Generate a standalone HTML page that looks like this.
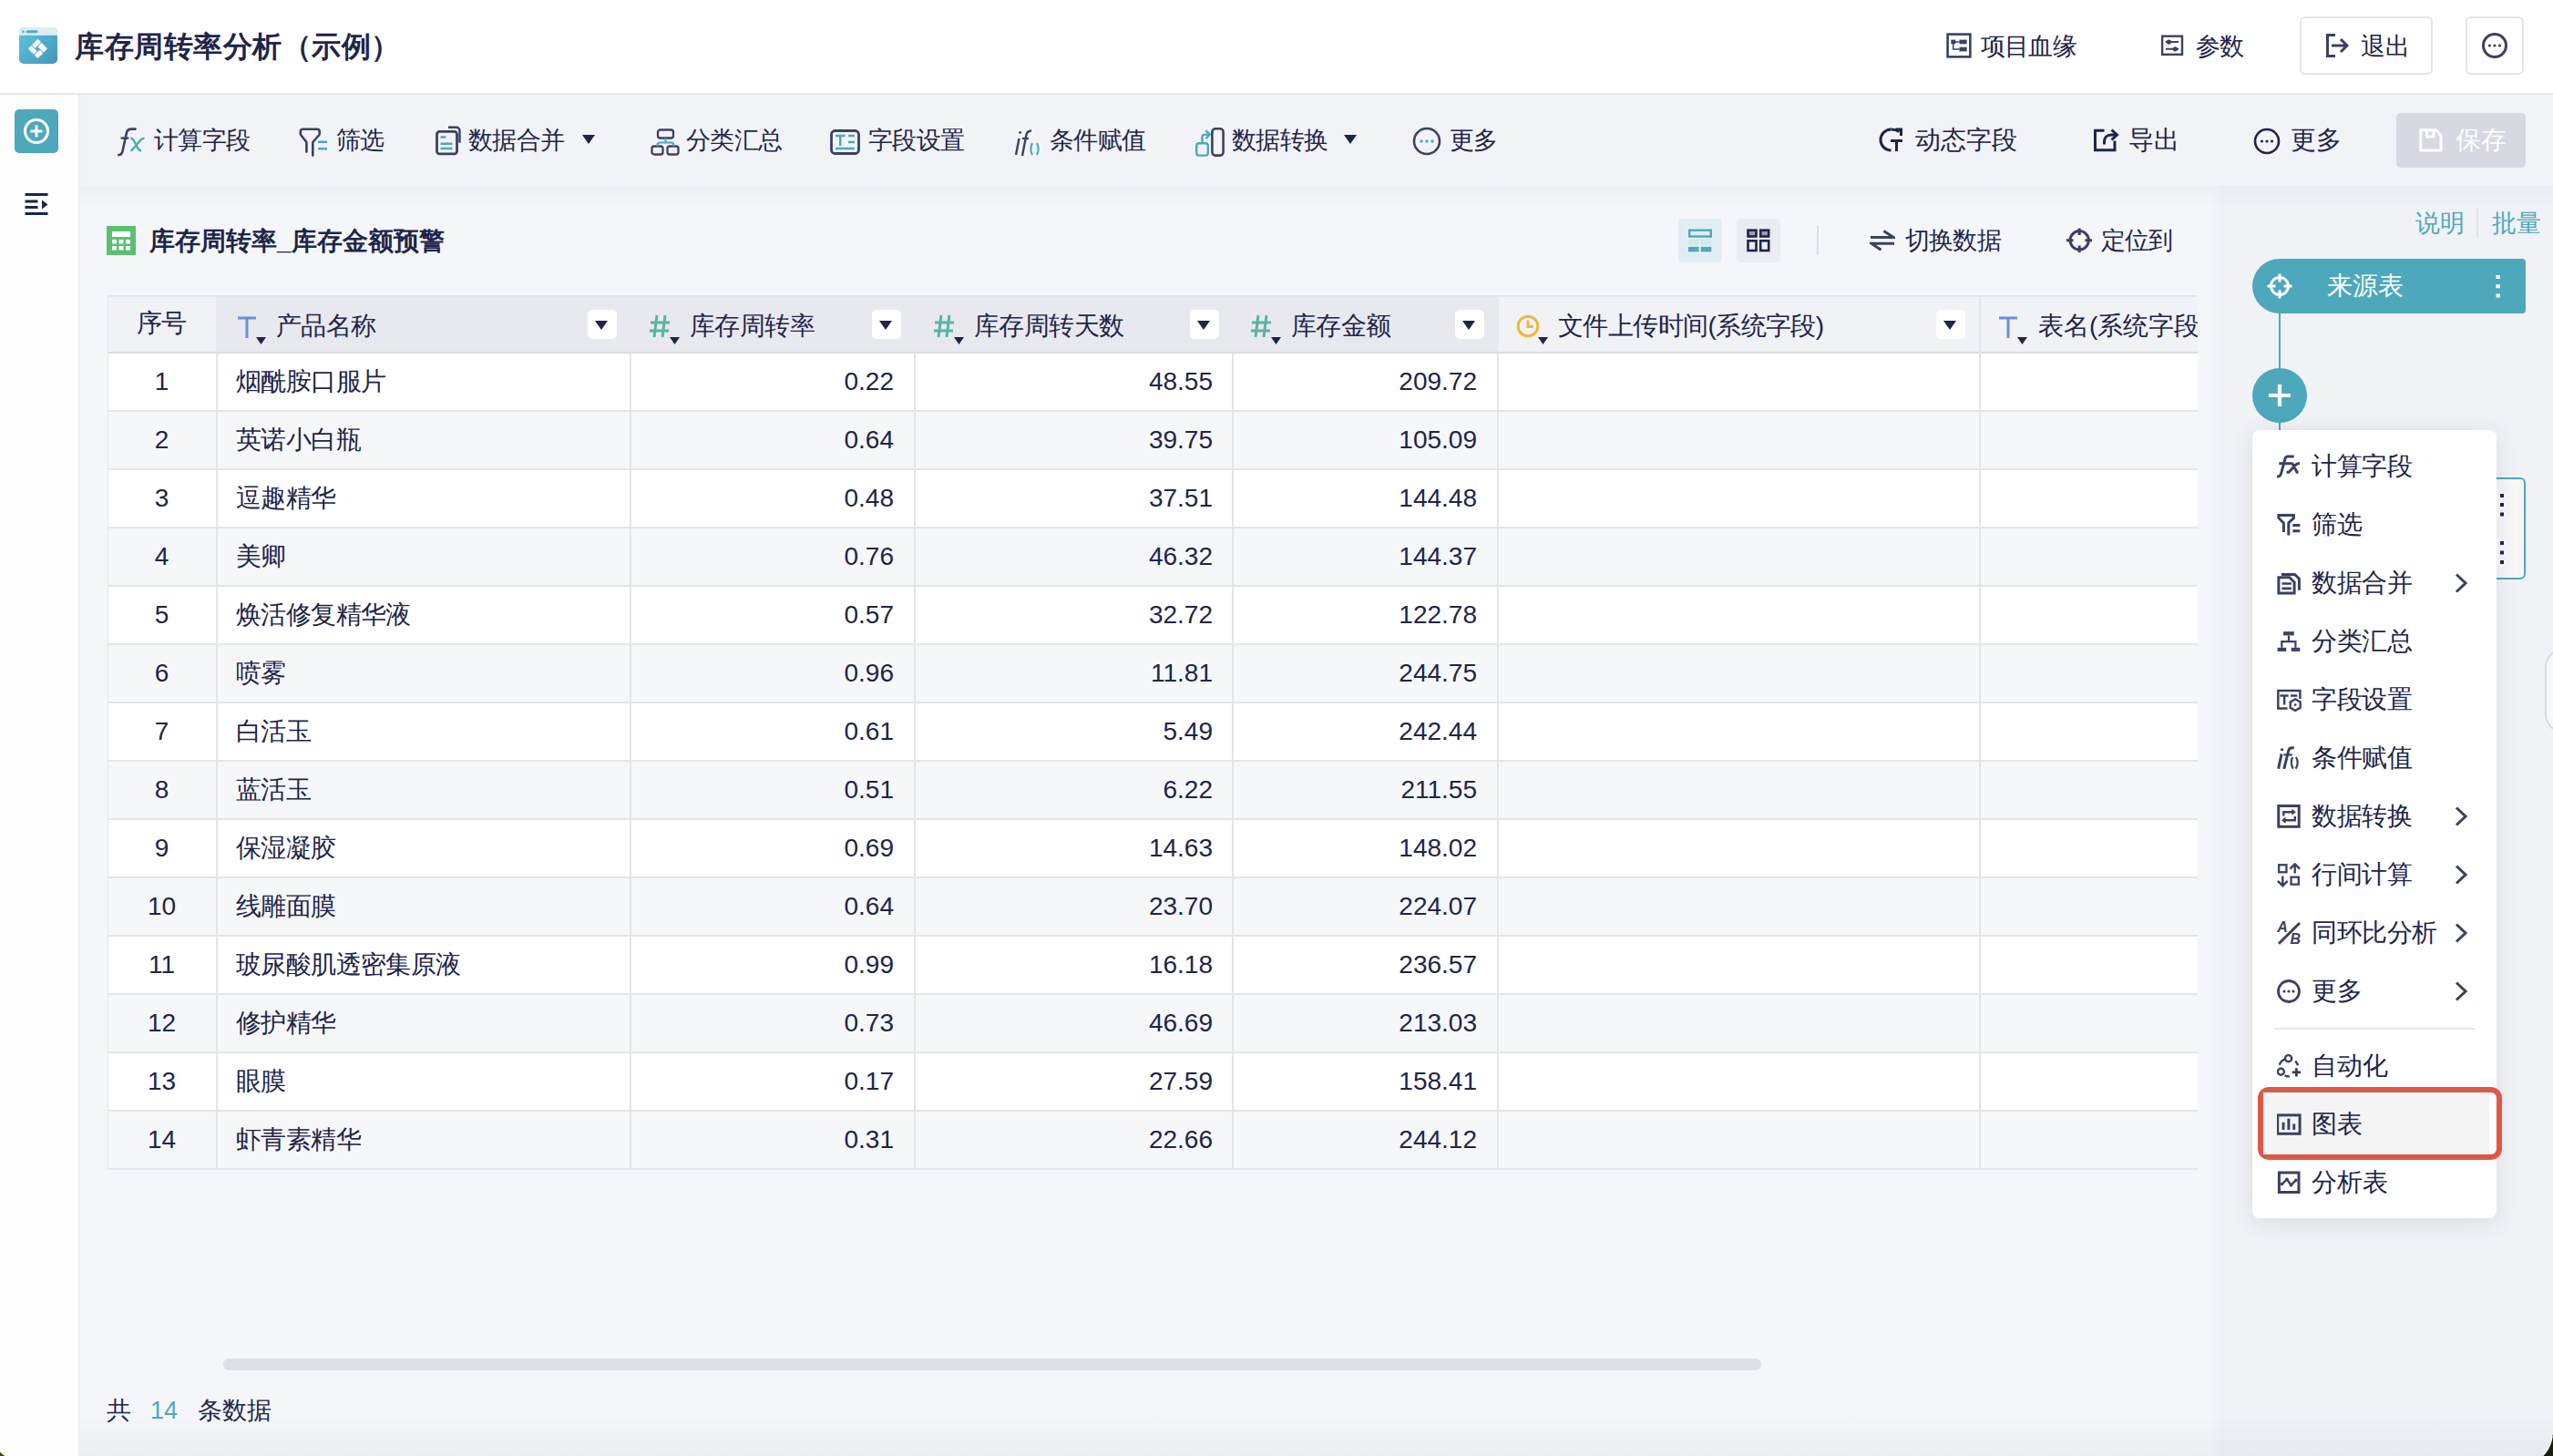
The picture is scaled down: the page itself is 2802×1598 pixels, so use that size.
<!DOCTYPE html>
<html><head><meta charset="utf-8"><style>
html,body{margin:0;padding:0;}
body{width:2802px;height:1598px;position:relative;overflow:hidden;font-family:"Liberation Sans",sans-serif;background:#f5f6f9;}
.r{position:absolute;}
.t{position:absolute;white-space:nowrap;}
</style></head><body>
<div class="r" style="left:0px;top:0px;width:2802px;height:1598px;background:#f5f6f9"></div><div class="r" style="left:2441px;top:204px;width:361px;height:1394px;background:#f1f2f6;box-shadow:-6px 0 14px rgba(30,40,80,0.03)"></div><div class="r" style="left:0px;top:0px;width:2802px;height:102px;background:#ffffff"></div><div class="r" style="left:0px;top:102px;width:2802px;height:2px;background:#e4e6eb"></div><div class="r" style="left:0px;top:104px;width:86px;height:1494px;background:#fdfdfe"></div><div class="r" style="left:86px;top:104px;width:2px;height:1494px;background:#eceef3"></div><div class="r" style="left:88px;top:104px;width:2714px;height:100px;background:#f2f3f7"></div><div class="r" style="left:88px;top:204px;width:2714px;height:22px;background:linear-gradient(180deg,rgba(40,50,90,0.035),rgba(40,50,90,0))"></div><svg class="r" style="left:21px;top:30px" width="42" height="40" viewBox="0 0 42 40" fill="none">
<defs><linearGradient id="lg" x1="0" y1="0" x2="1" y2="1"><stop offset="0" stop-color="#62c5de"/><stop offset="1" stop-color="#4096b8"/></linearGradient>
<clipPath id="lc"><rect x="0" y="0" width="42" height="40" rx="5"/></clipPath></defs>
<g clip-path="url(#lc)"><rect x="0" y="0" width="42" height="40" fill="url(#lg)"/><rect x="0" y="0" width="42" height="8.8" fill="#dbeef4"/></g>
<circle cx="4.4" cy="4.7" r="1.5" fill="#58b6cf"/><rect x="7.6" y="3.2" width="13" height="3" rx="1.5" fill="#52abc6"/>
<g fill="#f6f7f9" transform="translate(20.4 23.4) rotate(45) scale(-1 1)">
<rect x="-7.6" y="-7.6" width="9.2" height="6.1" rx="1"/><rect x="2.4" y="-7.6" width="5.2" height="9.2" rx="1"/>
<rect x="-1.6" y="2.4" width="9.2" height="5.2" rx="1"/><rect x="-7.6" y="-0.8" width="5.2" height="8.4" rx="1"/>
</g></svg><div class="t" style="left:82px;top:34.5px;font-size:32px;line-height:32px;color:#1e254a;font-weight:bold;letter-spacing:0.5px;">库存周转率分析（示例）</div><svg class="r" style="left:2136px;top:36px" width="28" height="28" viewBox="0 0 28 28" fill="none"><rect x="1.6" y="1.6" width="24.75" height="24.75" stroke="#3b4163" stroke-width="2.6"/>
<rect x="5.3" y="7.6" width="4.9" height="4.7" fill="#3b4163"/><rect x="14.5" y="7.6" width="8.2" height="4.7" fill="#3b4163"/><rect x="14.5" y="15.7" width="8.2" height="4.7" fill="#3b4163"/>
<path d="M10 9.9H14.5M7.7 12V17.9H14.5" stroke="#3b4163" stroke-width="1.5"/></svg><div class="t" style="left:2174px;top:37.5px;font-size:27px;line-height:27px;color:#1e254a;font-weight:normal;letter-spacing:-0.8px;">项目血缘</div><svg class="r" style="left:2372px;top:38px" width="26" height="25" viewBox="0 0 26 25" fill="none"><rect x="1.1" y="1.7" width="21.9" height="20.1" stroke="#3b4163" stroke-width="2.4"/>
<path d="M4.9 8.1H19.1M4.9 15.8H19.1" stroke="#3b4163" stroke-width="2"/><circle cx="8.4" cy="8.1" r="2.6" fill="#3b4163"/><circle cx="15.3" cy="15.8" r="2.6" fill="#3b4163"/></svg><div class="t" style="left:2410px;top:37.5px;font-size:27px;line-height:27px;color:#1e254a;font-weight:normal;letter-spacing:-1.5px;">参数</div><div class="r" style="left:2524px;top:18px;width:146px;height:64px;box-sizing:border-box;border:2px solid #e3e5ec;border-radius:6px;background:#fff"></div><svg class="r" style="left:2553px;top:37px" width="26" height="26" viewBox="0 0 26 26" fill="none"><path d="M10 1.5H1.5v23H10" stroke="#3b4163" stroke-width="3"/><path d="M6 13h17M16 6l7 7-7 7" stroke="#3b4163" stroke-width="3"/></svg><div class="t" style="left:2591px;top:37.5px;font-size:27px;line-height:27px;color:#1e254a;font-weight:normal;">退出</div><div class="r" style="left:2706px;top:18px;width:64px;height:64px;box-sizing:border-box;border:2px solid #e3e5ec;border-radius:6px;background:#fff"></div><svg class="r" style="left:2723px;top:35px" width="30" height="30" viewBox="0 0 30 30" fill="none"><circle cx="15" cy="15" r="12.5" stroke="#3b4163" stroke-width="3"/><circle cx="9.5" cy="15" r="1.6" fill="#3b4163"/><circle cx="15" cy="15" r="1.6" fill="#3b4163"/><circle cx="20.5" cy="15" r="1.6" fill="#3b4163"/></svg><div class="r" style="left:16px;top:120px;width:48px;height:48px;background:#4da8bb;border-radius:5px"></div><svg class="r" style="left:16px;top:120px" width="48" height="48" viewBox="0 0 48 48" fill="none"><circle cx="24" cy="24" r="12.5" stroke="#fff" stroke-width="3"/><path d="M24 17.5v13M17.5 24h13" stroke="#fff" stroke-width="3"/></svg><svg class="r" style="left:27px;top:212px" width="26" height="24" viewBox="0 0 26 24" fill="none"><rect x="0.5" y="0" width="25" height="3" fill="#1e254a"/><rect x="0.5" y="7.5" width="14" height="3" fill="#1e254a"/>
<rect x="0.5" y="14" width="14" height="3" fill="#1e254a"/><rect x="0.5" y="21" width="25" height="3" fill="#1e254a"/><path d="M19 7.5l6.5 5-6.5 5z" fill="#1e254a"/></svg><svg class="r" style="left:129px;top:140px" width="32" height="32" viewBox="0 0 32 32" fill="none"><path d="M1.3 30Q4.5 30.3 5.5 26L10 5.5Q11 1.6 15 1.6H19.6" stroke="#3b4163" stroke-width="2.6" stroke-linecap="round"/><path d="M3.6 11.6H12.3" stroke="#3b4163" stroke-width="2.4"/>
<path d="M14.3 11.6Q16.5 11.6 18 14.5L22 22Q23 25.3 26 25.3M29.5 11.6Q27 11.6 25 14L17.5 23Q15.8 25.3 14.3 25.3" stroke="#4da8bb" stroke-width="2.4"/></svg><div class="t" style="left:169px;top:140.5px;font-size:27px;line-height:27px;color:#1e254a;font-weight:normal;letter-spacing:-0.7px;">计算字段</div><svg class="r" style="left:328px;top:140px" width="32" height="32" viewBox="0 0 32 32" fill="none"><path d="M8.4 26.6V16L2.5 8.5Q1.8 7.6 1.8 6.5V4.5Q1.8 1.8 4.5 1.8H20Q22.7 1.8 22.7 4.5V6.5Q22.7 7.6 22 8.5L15.3 16V30.6" stroke="#3b4163" stroke-width="2.6" stroke-linecap="round" stroke-linejoin="round"/>
<path d="M21 15.7h10M21 23.3h10" stroke="#4da8bb" stroke-width="2.4"/></svg><div class="t" style="left:369px;top:140.5px;font-size:27px;line-height:27px;color:#1e254a;font-weight:normal;letter-spacing:-0.7px;">筛选</div><svg class="r" style="left:477px;top:138px" width="32" height="34" viewBox="0 0 32 34" fill="none"><rect x="2.5" y="6.3" width="22" height="24.6" rx="3" stroke="#3b4163" stroke-width="2.8"/><path d="M15 1.8h9a3.5 3.5 0 0 1 3.5 3.5v13.5" stroke="#3b4163" stroke-width="2.4"/>
<path d="M6.5 12.5h6M6.5 19.8h13M6.5 25h13" stroke="#4da8bb" stroke-width="2.4"/></svg><div class="t" style="left:514px;top:140.5px;font-size:27px;line-height:27px;color:#1e254a;font-weight:normal;letter-spacing:-0.7px;">数据合并</div><svg class="r" style="left:639px;top:148px" width="14" height="10" viewBox="0 0 14 10" fill="none"><path d="M0 0h14L7 10z" fill="#1e254a"/></svg><svg class="r" style="left:714px;top:141px" width="32" height="30" viewBox="0 0 32 30" fill="none"><rect x="8" y="1.5" width="17" height="9" rx="2.5" stroke="#3b4163" stroke-width="2.3"/><rect x="1.5" y="19.5" width="12" height="9" rx="2.5" stroke="#3b4163" stroke-width="2.3"/><rect x="18.5" y="19.5" width="12" height="9" rx="2.5" stroke="#3b4163" stroke-width="2.3"/>
<path d="M16.5 10.5v5M7.5 19.5v-1a3 3 0 0 1 3-3h12a3 3 0 0 1 3 3v1" stroke="#4da8bb" stroke-width="2.1"/></svg><div class="t" style="left:753px;top:140.5px;font-size:27px;line-height:27px;color:#1e254a;font-weight:normal;letter-spacing:-0.7px;">分类汇总</div><svg class="r" style="left:911px;top:142px" width="34" height="28" viewBox="0 0 34 28" fill="none"><rect x="1.5" y="1.5" width="30" height="25" rx="4" stroke="#3b4163" stroke-width="2.8"/>
<path d="M6 7h10.5M11.2 7v11M20 7h7M20 14h7M6 21h21" stroke="#4da8bb" stroke-width="2.4"/></svg><div class="t" style="left:953px;top:140.5px;font-size:27px;line-height:27px;color:#1e254a;font-weight:normal;letter-spacing:-0.7px;">字段设置</div><svg class="r" style="left:1113px;top:140px" width="30" height="32" viewBox="0 0 30 32" fill="none"><path d="M5.5 12L2 30" stroke="#3b4163" stroke-width="2.4"/><circle cx="6.6" cy="5.5" r="1.4" fill="#3b4163"/>
<path d="M9 31l4.2-22c.6-3.5 2-5.5 5.8-5.5" stroke="#3b4163" stroke-width="2.4"/><path d="M9 12h7" stroke="#3b4163" stroke-width="2.2"/>
<path d="M20 17c-2 4-2 9 0 13M25 17c2 4 2 9 0 13" stroke="#4da8bb" stroke-width="2.2"/></svg><div class="t" style="left:1152px;top:140.5px;font-size:27px;line-height:27px;color:#1e254a;font-weight:normal;letter-spacing:-0.7px;">条件赋值</div><svg class="r" style="left:1312px;top:140px" width="33" height="33" viewBox="0 0 33 33" fill="none"><rect x="18.4" y="1.3" width="12.2" height="29.3" rx="3.5" stroke="#3b4163" stroke-width="2.6"/>
<rect x="1.2" y="17.3" width="12.6" height="13.3" rx="2.8" stroke="#4da8bb" stroke-width="2.4"/><path d="M7.4 16.1V10.5Q7.4 7.9 10 7.9H15M11.4 3.1L15.8 7.6L11.4 12.2" stroke="#4da8bb" stroke-width="2.4"/></svg><div class="t" style="left:1352px;top:140.5px;font-size:27px;line-height:27px;color:#1e254a;font-weight:normal;letter-spacing:-0.7px;">数据转换</div><svg class="r" style="left:1475px;top:148px" width="14" height="10" viewBox="0 0 14 10" fill="none"><path d="M0 0h14L7 10z" fill="#1e254a"/></svg><svg class="r" style="left:1550px;top:139px" width="32" height="32" viewBox="0 0 32 32" fill="none"><circle cx="16" cy="16" r="14" stroke="#3b4163" stroke-width="2.6"/><circle cx="10" cy="16" r="1.7" fill="#4da8bb"/><circle cx="16" cy="16" r="1.7" fill="#4da8bb"/><circle cx="22" cy="16" r="1.7" fill="#4da8bb"/></svg><div class="t" style="left:1591px;top:140.5px;font-size:27px;line-height:27px;color:#1e254a;font-weight:normal;letter-spacing:-0.7px;">更多</div><svg class="r" style="left:2062px;top:140px" width="28" height="28" viewBox="0 0 28 28" fill="none"><path d="M13.5 2A11.5 11.5 0 0 0 13.5 25" stroke="#1e254a" stroke-width="3"/><path d="M13.5 2c3 0 6 .6 9 2.5" stroke="#1e254a" stroke-width="3"/><path d="M18.5 2h6v7" stroke="#1e254a" stroke-width="3"/><path d="M13 14.5h13M19.5 14.5V26" stroke="#1e254a" stroke-width="3"/></svg><div class="t" style="left:2102px;top:140.0px;font-size:28px;line-height:28px;color:#1e254a;font-weight:normal;">动态字段</div><svg class="r" style="left:2296px;top:140px" width="30" height="28" viewBox="0 0 30 28" fill="none"><path d="M13.5 3.3H3.5v21.5h21.5V14.5" stroke="#1e254a" stroke-width="3"/><path d="M13.5 18.5v-3c0-4.5 3-7.5 7.5-7.5h4.5" stroke="#1e254a" stroke-width="3"/><path d="M21.5 2.5l6 5.5-6 5.5" stroke="#1e254a" stroke-width="3"/></svg><div class="t" style="left:2336px;top:140.0px;font-size:28px;line-height:28px;color:#1e254a;font-weight:normal;">导出</div><svg class="r" style="left:2473px;top:140px" width="30" height="30" viewBox="0 0 30 30" fill="none"><circle cx="15" cy="15" r="13" stroke="#1e254a" stroke-width="2.6"/><circle cx="9.5" cy="15" r="1.6" fill="#1e254a"/><circle cx="15" cy="15" r="1.6" fill="#1e254a"/><circle cx="20.5" cy="15" r="1.6" fill="#1e254a"/></svg><div class="t" style="left:2514px;top:140.0px;font-size:28px;line-height:28px;color:#1e254a;font-weight:normal;">更多</div><div class="r" style="left:2630px;top:124px;width:142px;height:60px;background:#d6d9e1;border-radius:5px"></div><svg class="r" style="left:2654px;top:140px" width="28" height="28" viewBox="0 0 28 28" fill="none"><path d="M2.8 2.8H19.5L25 8.5V25H2.8Z" stroke="#fdfdfe" stroke-width="3"/><path d="M9.5 2.8V10H17V2.8" stroke="#fdfdfe" stroke-width="3"/></svg><div class="t" style="left:2695px;top:140.0px;font-size:28px;line-height:28px;color:#fdfdfe;font-weight:normal;">保存</div><svg class="r" style="left:117px;top:248px" width="32" height="32" viewBox="0 0 32 32" fill="none"><rect width="32" height="32" fill="#5bbf73"/><rect x="6" y="6" width="20" height="6" fill="#fff"/>
<g fill="#fff"><rect x="6" y="15" width="5" height="4.5"/><rect x="13.5" y="15" width="5" height="4.5"/><rect x="21" y="15" width="5" height="4.5"/>
<rect x="6" y="22" width="5" height="4.5"/><rect x="13.5" y="22" width="5" height="4.5"/><rect x="21" y="22" width="5" height="4.5"/></g></svg><div class="t" style="left:164px;top:251.0px;font-size:28px;line-height:28px;color:#1e254a;font-weight:bold;">库存周转率_库存金额预警</div><div class="r" style="left:1842px;top:240px;width:48px;height:48px;background:#e0eef3;border-radius:5px"></div><svg class="r" style="left:1853px;top:251px" width="26" height="26" viewBox="0 0 26 26" fill="none"><rect x="1.2" y="1.7" width="23.6" height="6.8" stroke="#4da8bb" stroke-width="2.4"/>
<rect x="0" y="11.6" width="11.5" height="6" fill="#d0e9ee"/><rect x="13.8" y="11.6" width="11.5" height="6" fill="#d0e9ee"/>
<rect x="0" y="19.9" width="11.5" height="5.4" fill="#4da8bb"/><rect x="13.8" y="19.9" width="11.5" height="5.4" fill="#4da8bb"/></svg><div class="r" style="left:1906px;top:240px;width:48px;height:48px;background:#ebecf1;border-radius:5px"></div><svg class="r" style="left:1917px;top:251px" width="27" height="27" viewBox="0 0 27 27" fill="none"><rect x="1.5" y="1.7" width="9" height="6.8" stroke="#1e254a" stroke-width="2.6" fill="#9a9db1"/><rect x="15.2" y="1.7" width="9" height="6.8" stroke="#1e254a" stroke-width="2.6" fill="#9a9db1"/>
<rect x="1.5" y="13.3" width="9" height="10.7" stroke="#1e254a" stroke-width="2.6"/><rect x="15.2" y="13.3" width="9" height="10.7" stroke="#1e254a" stroke-width="2.6"/></svg><div class="r" style="left:1994px;top:248px;width:2px;height:32px;background:#dcdee4"></div><svg class="r" style="left:2052px;top:251px" width="28" height="26" viewBox="0 0 28 26" fill="none"><path d="M1 9.6H26.2L15.5 2.5M27 16.2H1.8L12.5 23.3" stroke="#3b4163" stroke-width="3"/></svg><div class="t" style="left:2091px;top:251.0px;font-size:27px;line-height:27px;color:#1e254a;font-weight:normal;letter-spacing:-0.8px;">切换数据</div><svg class="r" style="left:2267px;top:249px" width="30" height="30" viewBox="0 0 30 30" fill="none"><circle cx="15.2" cy="14.8" r="10.2" stroke="#3b4163" stroke-width="3"/><path d="M15.2 1.5v7.5M15.2 20.6v7.5M1 14.8h7.5M21.5 14.8h7.5" stroke="#3b4163" stroke-width="3"/></svg><div class="t" style="left:2306px;top:251.0px;font-size:27px;line-height:27px;color:#1e254a;font-weight:normal;letter-spacing:-0.9px;">定位到</div><div class="r" style="left:118px;top:324px;width:2294px;height:962px;overflow:hidden"><div class="r" style="left:0px;top:0px;width:2582px;height:64px;background:#e8e9ee"></div><div class="r" style="left:0px;top:0px;width:119px;height:64px;background:#f1f2f6"></div><div class="r" style="left:1527px;top:0px;width:1100px;height:64px;background:#f1f2f6"></div><div class="r" style="left:0px;top:64px;width:2582px;height:64px;background:#ffffff"></div><div class="r" style="left:0px;top:126px;width:2582px;height:2px;background:#e4e5eb"></div><div class="r" style="left:0px;top:128px;width:2582px;height:64px;background:#f6f7f9"></div><div class="r" style="left:0px;top:190px;width:2582px;height:2px;background:#e4e5eb"></div><div class="r" style="left:0px;top:192px;width:2582px;height:64px;background:#ffffff"></div><div class="r" style="left:0px;top:254px;width:2582px;height:2px;background:#e4e5eb"></div><div class="r" style="left:0px;top:256px;width:2582px;height:64px;background:#f6f7f9"></div><div class="r" style="left:0px;top:318px;width:2582px;height:2px;background:#e4e5eb"></div><div class="r" style="left:0px;top:320px;width:2582px;height:64px;background:#ffffff"></div><div class="r" style="left:0px;top:382px;width:2582px;height:2px;background:#e4e5eb"></div><div class="r" style="left:0px;top:384px;width:2582px;height:64px;background:#f6f7f9"></div><div class="r" style="left:0px;top:446px;width:2582px;height:2px;background:#e4e5eb"></div><div class="r" style="left:0px;top:448px;width:2582px;height:64px;background:#ffffff"></div><div class="r" style="left:0px;top:510px;width:2582px;height:2px;background:#e4e5eb"></div><div class="r" style="left:0px;top:512px;width:2582px;height:64px;background:#f6f7f9"></div><div class="r" style="left:0px;top:574px;width:2582px;height:2px;background:#e4e5eb"></div><div class="r" style="left:0px;top:576px;width:2582px;height:64px;background:#ffffff"></div><div class="r" style="left:0px;top:638px;width:2582px;height:2px;background:#e4e5eb"></div><div class="r" style="left:0px;top:640px;width:2582px;height:64px;background:#f6f7f9"></div><div class="r" style="left:0px;top:702px;width:2582px;height:2px;background:#e4e5eb"></div><div class="r" style="left:0px;top:704px;width:2582px;height:64px;background:#ffffff"></div><div class="r" style="left:0px;top:766px;width:2582px;height:2px;background:#e4e5eb"></div><div class="r" style="left:0px;top:768px;width:2582px;height:64px;background:#f6f7f9"></div><div class="r" style="left:0px;top:830px;width:2582px;height:2px;background:#e4e5eb"></div><div class="r" style="left:0px;top:832px;width:2582px;height:64px;background:#ffffff"></div><div class="r" style="left:0px;top:894px;width:2582px;height:2px;background:#e4e5eb"></div><div class="r" style="left:0px;top:896px;width:2582px;height:64px;background:#f6f7f9"></div><div class="r" style="left:0px;top:958px;width:2582px;height:2px;background:#e4e5eb"></div><div class="r" style="left:0px;top:62px;width:2582px;height:2px;background:#dadce3"></div><div class="r" style="left:0px;top:0px;width:2582px;height:2px;background:#e4e5eb"></div><div class="r" style="left:-1px;top:0px;width:2px;height:960px;background:#e4e5eb"></div><div class="r" style="left:119px;top:64px;width:2px;height:896px;background:#e4e5eb"></div><div class="r" style="left:573px;top:64px;width:2px;height:896px;background:#e4e5eb"></div><div class="r" style="left:885px;top:64px;width:2px;height:896px;background:#e4e5eb"></div><div class="r" style="left:1234px;top:64px;width:2px;height:896px;background:#e4e5eb"></div><div class="r" style="left:1525px;top:64px;width:2px;height:896px;background:#e4e5eb"></div><div class="r" style="left:2054px;top:64px;width:2px;height:896px;background:#e4e5eb"></div><div class="r" style="left:2054px;top:0px;width:2px;height:64px;background:#e4e5eb"></div></div><div class="t" style="left:150px;top:340.5px;font-size:28px;line-height:28px;color:#1e254a;font-weight:normal;letter-spacing:-0.6px;">序号</div><svg class="r" style="left:260px;top:347px" width="22" height="24" viewBox="0 0 22 24" fill="none"><path d="M1 2h20M11 2v22" stroke="#6b8ed9" stroke-width="3"/></svg><svg class="r" style="left:281px;top:370px" width="11" height="8" viewBox="0 0 11 8" fill="none"><path d="M0 0h11L5.5 8z" fill="#1e254a"/></svg><div class="t" style="left:303px;top:344.0px;font-size:28px;line-height:28px;color:#1e254a;font-weight:normal;letter-spacing:-0.6px;">产品名称</div><div class="r" style="left:645px;top:340px;width:32px;height:32px;background:#fff;border-radius:5px"></div><svg class="r" style="left:653px;top:352px" width="14" height="10" viewBox="0 0 14 10" fill="none"><path d="M0 0h14L7 10z" fill="#1e254a"/></svg><svg class="r" style="left:713px;top:345px" width="23" height="26" viewBox="0 0 23 26" fill="none"><path d="M8 1L5 25M17 1l-3 24M1 9h21M0 18h21" stroke="#5bb3a2" stroke-width="3"/></svg><svg class="r" style="left:735px;top:370px" width="11" height="8" viewBox="0 0 11 8" fill="none"><path d="M0 0h11L5.5 8z" fill="#1e254a"/></svg><div class="t" style="left:757px;top:344.0px;font-size:28px;line-height:28px;color:#1e254a;font-weight:normal;letter-spacing:-0.6px;">库存周转率</div><div class="r" style="left:957px;top:340px;width:32px;height:32px;background:#fff;border-radius:5px"></div><svg class="r" style="left:965px;top:352px" width="14" height="10" viewBox="0 0 14 10" fill="none"><path d="M0 0h14L7 10z" fill="#1e254a"/></svg><svg class="r" style="left:1025px;top:345px" width="23" height="26" viewBox="0 0 23 26" fill="none"><path d="M8 1L5 25M17 1l-3 24M1 9h21M0 18h21" stroke="#5bb3a2" stroke-width="3"/></svg><svg class="r" style="left:1047px;top:370px" width="11" height="8" viewBox="0 0 11 8" fill="none"><path d="M0 0h11L5.5 8z" fill="#1e254a"/></svg><div class="t" style="left:1069px;top:344.0px;font-size:28px;line-height:28px;color:#1e254a;font-weight:normal;letter-spacing:-0.6px;">库存周转天数</div><div class="r" style="left:1306px;top:340px;width:32px;height:32px;background:#fff;border-radius:5px"></div><svg class="r" style="left:1314px;top:352px" width="14" height="10" viewBox="0 0 14 10" fill="none"><path d="M0 0h14L7 10z" fill="#1e254a"/></svg><svg class="r" style="left:1373px;top:345px" width="23" height="26" viewBox="0 0 23 26" fill="none"><path d="M8 1L5 25M17 1l-3 24M1 9h21M0 18h21" stroke="#5bb3a2" stroke-width="3"/></svg><svg class="r" style="left:1395px;top:370px" width="11" height="8" viewBox="0 0 11 8" fill="none"><path d="M0 0h11L5.5 8z" fill="#1e254a"/></svg><div class="t" style="left:1417px;top:344.0px;font-size:28px;line-height:28px;color:#1e254a;font-weight:normal;letter-spacing:-0.6px;">库存金额</div><div class="r" style="left:1597px;top:340px;width:32px;height:32px;background:#fff;border-radius:5px"></div><svg class="r" style="left:1605px;top:352px" width="14" height="10" viewBox="0 0 14 10" fill="none"><path d="M0 0h14L7 10z" fill="#1e254a"/></svg><svg class="r" style="left:1664px;top:345px" width="26" height="26" viewBox="0 0 26 26" fill="none"><circle cx="13" cy="13" r="10.8" stroke="#f0b73c" stroke-width="3"/><path d="M13 6.5v7h6" stroke="#f0b73c" stroke-width="3"/></svg><svg class="r" style="left:1688px;top:370px" width="11" height="8" viewBox="0 0 11 8" fill="none"><path d="M0 0h11L5.5 8z" fill="#1e254a"/></svg><div class="t" style="left:1710px;top:344.0px;font-size:28px;line-height:28px;color:#1e254a;font-weight:normal;letter-spacing:-0.6px;">文件上传时间(系统字段)</div><div class="r" style="left:2125px;top:340px;width:32px;height:32px;background:#fff;border-radius:5px"></div><svg class="r" style="left:2133px;top:352px" width="14" height="10" viewBox="0 0 14 10" fill="none"><path d="M0 0h14L7 10z" fill="#1e254a"/></svg><div class="r" style="left:2180px;top:330px;width:232px;height:56px;overflow:hidden"><svg class="r" style="left:13px;top:17px" width="22" height="24" viewBox="0 0 22 24" fill="none"><path d="M1 2h20M11 2v22" stroke="#6b8ed9" stroke-width="3"/></svg><svg class="r" style="left:34px;top:40px" width="11" height="8" viewBox="0 0 11 8"><path d="M0 0h11L5.5 8z" fill="#1e254a"/></svg><div class="t" style="left:57px;top:14px;font-size:28px;line-height:28px;color:#1e254a">表名(系统字段)</div></div><div class="t" style="left:118px;width:119px;text-align:center;top:405px;font-size:28px;line-height:28px;color:#1e254a">1</div><div class="t" style="left:259px;top:405.0px;font-size:28px;line-height:28px;color:#1e254a;font-weight:normal;letter-spacing:-0.6px;">烟酰胺口服片</div><div class="t" style="right:1821px;top:405.0px;font-size:28px;line-height:28px;color:#1e254a;font-weight:normal;text-align:right">0.22</div><div class="t" style="right:1471px;top:405.0px;font-size:28px;line-height:28px;color:#1e254a;font-weight:normal;text-align:right">48.55</div><div class="t" style="right:1181px;top:405.0px;font-size:28px;line-height:28px;color:#1e254a;font-weight:normal;text-align:right">209.72</div><div class="t" style="left:118px;width:119px;text-align:center;top:469px;font-size:28px;line-height:28px;color:#1e254a">2</div><div class="t" style="left:259px;top:469.0px;font-size:28px;line-height:28px;color:#1e254a;font-weight:normal;letter-spacing:-0.6px;">英诺小白瓶</div><div class="t" style="right:1821px;top:469.0px;font-size:28px;line-height:28px;color:#1e254a;font-weight:normal;text-align:right">0.64</div><div class="t" style="right:1471px;top:469.0px;font-size:28px;line-height:28px;color:#1e254a;font-weight:normal;text-align:right">39.75</div><div class="t" style="right:1181px;top:469.0px;font-size:28px;line-height:28px;color:#1e254a;font-weight:normal;text-align:right">105.09</div><div class="t" style="left:118px;width:119px;text-align:center;top:533px;font-size:28px;line-height:28px;color:#1e254a">3</div><div class="t" style="left:259px;top:533.0px;font-size:28px;line-height:28px;color:#1e254a;font-weight:normal;letter-spacing:-0.6px;">逗趣精华</div><div class="t" style="right:1821px;top:533.0px;font-size:28px;line-height:28px;color:#1e254a;font-weight:normal;text-align:right">0.48</div><div class="t" style="right:1471px;top:533.0px;font-size:28px;line-height:28px;color:#1e254a;font-weight:normal;text-align:right">37.51</div><div class="t" style="right:1181px;top:533.0px;font-size:28px;line-height:28px;color:#1e254a;font-weight:normal;text-align:right">144.48</div><div class="t" style="left:118px;width:119px;text-align:center;top:597px;font-size:28px;line-height:28px;color:#1e254a">4</div><div class="t" style="left:259px;top:597.0px;font-size:28px;line-height:28px;color:#1e254a;font-weight:normal;letter-spacing:-0.6px;">美卿</div><div class="t" style="right:1821px;top:597.0px;font-size:28px;line-height:28px;color:#1e254a;font-weight:normal;text-align:right">0.76</div><div class="t" style="right:1471px;top:597.0px;font-size:28px;line-height:28px;color:#1e254a;font-weight:normal;text-align:right">46.32</div><div class="t" style="right:1181px;top:597.0px;font-size:28px;line-height:28px;color:#1e254a;font-weight:normal;text-align:right">144.37</div><div class="t" style="left:118px;width:119px;text-align:center;top:661px;font-size:28px;line-height:28px;color:#1e254a">5</div><div class="t" style="left:259px;top:661.0px;font-size:28px;line-height:28px;color:#1e254a;font-weight:normal;letter-spacing:-0.6px;">焕活修复精华液</div><div class="t" style="right:1821px;top:661.0px;font-size:28px;line-height:28px;color:#1e254a;font-weight:normal;text-align:right">0.57</div><div class="t" style="right:1471px;top:661.0px;font-size:28px;line-height:28px;color:#1e254a;font-weight:normal;text-align:right">32.72</div><div class="t" style="right:1181px;top:661.0px;font-size:28px;line-height:28px;color:#1e254a;font-weight:normal;text-align:right">122.78</div><div class="t" style="left:118px;width:119px;text-align:center;top:725px;font-size:28px;line-height:28px;color:#1e254a">6</div><div class="t" style="left:259px;top:725.0px;font-size:28px;line-height:28px;color:#1e254a;font-weight:normal;letter-spacing:-0.6px;">喷雾</div><div class="t" style="right:1821px;top:725.0px;font-size:28px;line-height:28px;color:#1e254a;font-weight:normal;text-align:right">0.96</div><div class="t" style="right:1471px;top:725.0px;font-size:28px;line-height:28px;color:#1e254a;font-weight:normal;text-align:right">11.81</div><div class="t" style="right:1181px;top:725.0px;font-size:28px;line-height:28px;color:#1e254a;font-weight:normal;text-align:right">244.75</div><div class="t" style="left:118px;width:119px;text-align:center;top:789px;font-size:28px;line-height:28px;color:#1e254a">7</div><div class="t" style="left:259px;top:789.0px;font-size:28px;line-height:28px;color:#1e254a;font-weight:normal;letter-spacing:-0.6px;">白活玉</div><div class="t" style="right:1821px;top:789.0px;font-size:28px;line-height:28px;color:#1e254a;font-weight:normal;text-align:right">0.61</div><div class="t" style="right:1471px;top:789.0px;font-size:28px;line-height:28px;color:#1e254a;font-weight:normal;text-align:right">5.49</div><div class="t" style="right:1181px;top:789.0px;font-size:28px;line-height:28px;color:#1e254a;font-weight:normal;text-align:right">242.44</div><div class="t" style="left:118px;width:119px;text-align:center;top:853px;font-size:28px;line-height:28px;color:#1e254a">8</div><div class="t" style="left:259px;top:853.0px;font-size:28px;line-height:28px;color:#1e254a;font-weight:normal;letter-spacing:-0.6px;">蓝活玉</div><div class="t" style="right:1821px;top:853.0px;font-size:28px;line-height:28px;color:#1e254a;font-weight:normal;text-align:right">0.51</div><div class="t" style="right:1471px;top:853.0px;font-size:28px;line-height:28px;color:#1e254a;font-weight:normal;text-align:right">6.22</div><div class="t" style="right:1181px;top:853.0px;font-size:28px;line-height:28px;color:#1e254a;font-weight:normal;text-align:right">211.55</div><div class="t" style="left:118px;width:119px;text-align:center;top:917px;font-size:28px;line-height:28px;color:#1e254a">9</div><div class="t" style="left:259px;top:917.0px;font-size:28px;line-height:28px;color:#1e254a;font-weight:normal;letter-spacing:-0.6px;">保湿凝胶</div><div class="t" style="right:1821px;top:917.0px;font-size:28px;line-height:28px;color:#1e254a;font-weight:normal;text-align:right">0.69</div><div class="t" style="right:1471px;top:917.0px;font-size:28px;line-height:28px;color:#1e254a;font-weight:normal;text-align:right">14.63</div><div class="t" style="right:1181px;top:917.0px;font-size:28px;line-height:28px;color:#1e254a;font-weight:normal;text-align:right">148.02</div><div class="t" style="left:118px;width:119px;text-align:center;top:981px;font-size:28px;line-height:28px;color:#1e254a">10</div><div class="t" style="left:259px;top:981.0px;font-size:28px;line-height:28px;color:#1e254a;font-weight:normal;letter-spacing:-0.6px;">线雕面膜</div><div class="t" style="right:1821px;top:981.0px;font-size:28px;line-height:28px;color:#1e254a;font-weight:normal;text-align:right">0.64</div><div class="t" style="right:1471px;top:981.0px;font-size:28px;line-height:28px;color:#1e254a;font-weight:normal;text-align:right">23.70</div><div class="t" style="right:1181px;top:981.0px;font-size:28px;line-height:28px;color:#1e254a;font-weight:normal;text-align:right">224.07</div><div class="t" style="left:118px;width:119px;text-align:center;top:1045px;font-size:28px;line-height:28px;color:#1e254a">11</div><div class="t" style="left:259px;top:1045.0px;font-size:28px;line-height:28px;color:#1e254a;font-weight:normal;letter-spacing:-0.6px;">玻尿酸肌透密集原液</div><div class="t" style="right:1821px;top:1045.0px;font-size:28px;line-height:28px;color:#1e254a;font-weight:normal;text-align:right">0.99</div><div class="t" style="right:1471px;top:1045.0px;font-size:28px;line-height:28px;color:#1e254a;font-weight:normal;text-align:right">16.18</div><div class="t" style="right:1181px;top:1045.0px;font-size:28px;line-height:28px;color:#1e254a;font-weight:normal;text-align:right">236.57</div><div class="t" style="left:118px;width:119px;text-align:center;top:1109px;font-size:28px;line-height:28px;color:#1e254a">12</div><div class="t" style="left:259px;top:1109.0px;font-size:28px;line-height:28px;color:#1e254a;font-weight:normal;letter-spacing:-0.6px;">修护精华</div><div class="t" style="right:1821px;top:1109.0px;font-size:28px;line-height:28px;color:#1e254a;font-weight:normal;text-align:right">0.73</div><div class="t" style="right:1471px;top:1109.0px;font-size:28px;line-height:28px;color:#1e254a;font-weight:normal;text-align:right">46.69</div><div class="t" style="right:1181px;top:1109.0px;font-size:28px;line-height:28px;color:#1e254a;font-weight:normal;text-align:right">213.03</div><div class="t" style="left:118px;width:119px;text-align:center;top:1173px;font-size:28px;line-height:28px;color:#1e254a">13</div><div class="t" style="left:259px;top:1173.0px;font-size:28px;line-height:28px;color:#1e254a;font-weight:normal;letter-spacing:-0.6px;">眼膜</div><div class="t" style="right:1821px;top:1173.0px;font-size:28px;line-height:28px;color:#1e254a;font-weight:normal;text-align:right">0.17</div><div class="t" style="right:1471px;top:1173.0px;font-size:28px;line-height:28px;color:#1e254a;font-weight:normal;text-align:right">27.59</div><div class="t" style="right:1181px;top:1173.0px;font-size:28px;line-height:28px;color:#1e254a;font-weight:normal;text-align:right">158.41</div><div class="t" style="left:118px;width:119px;text-align:center;top:1237px;font-size:28px;line-height:28px;color:#1e254a">14</div><div class="t" style="left:259px;top:1237.0px;font-size:28px;line-height:28px;color:#1e254a;font-weight:normal;letter-spacing:-0.6px;">虾青素精华</div><div class="t" style="right:1821px;top:1237.0px;font-size:28px;line-height:28px;color:#1e254a;font-weight:normal;text-align:right">0.31</div><div class="t" style="right:1471px;top:1237.0px;font-size:28px;line-height:28px;color:#1e254a;font-weight:normal;text-align:right">22.66</div><div class="t" style="right:1181px;top:1237.0px;font-size:28px;line-height:28px;color:#1e254a;font-weight:normal;text-align:right">244.12</div><div class="r" style="left:245px;top:1491px;width:1688px;height:13px;background:#dfe0e5;border-radius:7px"></div><div class="t" style="left:117px;top:1534.5px;font-size:27px;line-height:27px;color:#1e254a;font-weight:normal;">共</div><div class="t" style="left:165px;top:1534.5px;font-size:27px;line-height:27px;color:#4da8bb;font-weight:normal;">14</div><div class="t" style="left:217px;top:1534.5px;font-size:27px;line-height:27px;color:#1e254a;font-weight:normal;">条数据</div><div class="t" style="left:2651px;top:231.5px;font-size:27px;line-height:27px;color:#4da8bb;font-weight:normal;">说明</div><div class="r" style="left:2718px;top:229px;width:2px;height:31px;background:#dfe1e6"></div><div class="t" style="left:2735px;top:231.5px;font-size:27px;line-height:27px;color:#4da8bb;font-weight:normal;">批量</div><div class="r" style="left:2472px;top:284px;width:300px;height:60px;background:#4da8bb;border-radius:30px 4px 4px 30px"></div><svg class="r" style="left:2487px;top:299px" width="30" height="30" viewBox="0 0 30 30" fill="none"><circle cx="15" cy="15" r="9.5" stroke="#fff" stroke-width="3"/><path d="M15 1.5v9M15 19.5v9M1.5 15h9M19.5 15h9" stroke="#fff" stroke-width="3"/></svg><div class="t" style="left:2554px;top:300.0px;font-size:28px;line-height:28px;color:#ffffff;font-weight:normal;">来源表</div><svg class="r" style="left:2739px;top:301px" width="6" height="26" viewBox="0 0 6 26" fill="none"><rect x="0.5" y="1" width="4.5" height="4" fill="#fff"/><rect x="0.5" y="11.3" width="4.5" height="4" fill="#fff"/><rect x="0.5" y="21.5" width="4.5" height="4" fill="#fff"/></svg><div class="r" style="left:2501px;top:344px;width:2px;height:130px;background:#4da8bb"></div><div class="r" style="left:2472px;top:404px;width:60px;height:60px;background:#4da8bb;border-radius:50%"></div><svg class="r" style="left:2472px;top:404px" width="60" height="60" viewBox="0 0 60 60" fill="none"><path d="M30 18v24M18 30h24" stroke="#fff" stroke-width="4.2"/></svg><div class="r" style="left:2600px;top:524px;width:172px;height:112px;box-sizing:border-box;border:2px solid #4da8bb;border-radius:6px;background:linear-gradient(90deg,#ffffff,#f7f7f9)"></div><svg class="r" style="left:2744px;top:541px" width="5" height="80" viewBox="0 0 5 80" fill="none"><g fill="#1e254a"><rect y="1" width="4" height="4"/><rect y="11" width="4" height="4"/><rect y="21.5" width="4" height="4"/><rect y="53" width="4" height="4"/><rect y="63.5" width="4" height="4"/><rect y="74" width="4" height="4"/></g></svg><div class="r" style="left:2793px;top:712px;width:40px;height:92px;box-sizing:border-box;border:2px solid #d9dbe1;border-radius:20px;background:#f7f8fa"></div><div class="r" style="left:2472px;top:472px;width:268px;height:865px;background:#fff;border-radius:8px;box-shadow:0 4px 24px rgba(40,50,90,0.12)"></div><svg class="r" style="left:2499px;top:499px" width="28" height="28" viewBox="0 0 28 28" fill="none"><path d="M1 24c2 0 3-1 3.5-3L9 4.5c.5-2 1.5-2.5 3-2.5h5.5" stroke="#3b4163" stroke-width="3" stroke-linecap="round"/><path d="M2.3 9.7H17.4" stroke="#3b4163" stroke-width="3"/><path d="M17 9.7l5 9.5h1.5M25 9.7h-1.5c-1 0-2 .5-3 1.5L13 19.3h-2.5" stroke="#3b4163" stroke-width="3"/></svg><div class="t" style="left:2537px;top:498.0px;font-size:28px;line-height:28px;color:#1e254a;font-weight:normal;letter-spacing:-0.4px;">计算字段</div><svg class="r" style="left:2499px;top:563px" width="28" height="28" viewBox="0 0 28 28" fill="none"><path d="M7.4 20.9V11L1.9 5.5V2.45H18.4V5.5L12.8 11V24.5" stroke="#3b4163" stroke-width="3"/><path d="M17.3 13.6h8M17.3 19.8h8" stroke="#3b4163" stroke-width="3"/></svg><div class="t" style="left:2537px;top:562.0px;font-size:28px;line-height:28px;color:#1e254a;font-weight:normal;letter-spacing:-0.4px;">筛选</div><svg class="r" style="left:2499px;top:627px" width="28" height="28" viewBox="0 0 28 28" fill="none"><path d="M1.9 23.9V6.7H13.8L19.1 12V23.9Z" stroke="#3b4163" stroke-width="3"/><path d="M5.4 13.5h10.5M5.4 18.9h10.5" stroke="#3b4163" stroke-width="2.6"/><path d="M5 3.5H19.5L24.4 8.2V20.7" stroke="#3b4163" stroke-width="3"/></svg><div class="t" style="left:2537px;top:626.0px;font-size:28px;line-height:28px;color:#1e254a;font-weight:normal;letter-spacing:-0.4px;">数据合并</div><svg class="r" style="left:2694px;top:629px" width="14" height="22" viewBox="0 0 14 22" fill="none"><path d="M2 1.5l10 9.5-10 9.5" stroke="#3b4163" stroke-width="3"/></svg><svg class="r" style="left:2499px;top:691px" width="28" height="28" viewBox="0 0 28 28" fill="none"><rect x="7.1" y="2.2" width="11.7" height="4.2" fill="#3b4163"/><path d="M13 6.4V13.2M5.3 19.8V13.2H20.4V19.8" stroke="#3b4163" stroke-width="2.2"/><rect x="0.6" y="19.8" width="9.6" height="4.1" fill="#3b4163"/><rect x="15.7" y="19.8" width="9.6" height="4.1" fill="#3b4163"/></svg><div class="t" style="left:2537px;top:690.0px;font-size:28px;line-height:28px;color:#1e254a;font-weight:normal;letter-spacing:-0.4px;">分类汇总</div><svg class="r" style="left:2499px;top:755px" width="28" height="28" viewBox="0 0 28 28" fill="none"><path d="M25.4 12V3H1.3V22.4H11.6" stroke="#3b4163" stroke-width="2.5"/><path d="M3.4 8.5H12.6M8.2 8.5V18.6M15 8.5H22.3" stroke="#3b4163" stroke-width="2.4"/><path d="M20.2 12.3L25.65 15.45V21.75L20.2 24.9L14.75 21.75V15.45Z" stroke="#3b4163" stroke-width="2.4"/><circle cx="20.2" cy="18.6" r="1.4" fill="#3b4163"/></svg><div class="t" style="left:2537px;top:754.0px;font-size:28px;line-height:28px;color:#1e254a;font-weight:normal;letter-spacing:-0.4px;">字段设置</div><svg class="r" style="left:2499px;top:819px" width="28" height="28" viewBox="0 0 28 28" fill="none"><rect x="4" y="2.5" width="3.1" height="2.4" fill="#3b4163"/><path d="M5.1 8.4L1.6 24.8" stroke="#3b4163" stroke-width="3"/><path d="M7.8 24.8L12.7 5C13.2 2.8 14.5 1.8 16.5 1.8H18.8" stroke="#3b4163" stroke-width="3"/><path d="M7.5 9.4H16.8" stroke="#3b4163" stroke-width="2.2"/><path d="M17.2 12C15.3 15.5 15.3 21 17.8 24.6M21 12C23.3 15.5 23.3 21 20.5 24.6" stroke="#3b4163" stroke-width="2.2"/></svg><div class="t" style="left:2537px;top:818.0px;font-size:28px;line-height:28px;color:#1e254a;font-weight:normal;letter-spacing:-0.4px;">条件赋值</div><svg class="r" style="left:2499px;top:883px" width="28" height="28" viewBox="0 0 28 28" fill="none"><rect x="1.8" y="1.5" width="22.4" height="22.8" stroke="#3b4163" stroke-width="3"/><path d="M7.3 12.4V8.2H18.5M19.8 13V17.2H8.5" stroke="#3b4163" stroke-width="2.4"/><path d="M16.4 4.8L20.9 8.2L16.4 11.7ZM9.5 13.7L5.1 17.2L9.5 20.9Z" fill="#3b4163"/></svg><div class="t" style="left:2537px;top:882.0px;font-size:28px;line-height:28px;color:#1e254a;font-weight:normal;letter-spacing:-0.4px;">数据转换</div><svg class="r" style="left:2694px;top:885px" width="14" height="22" viewBox="0 0 14 22" fill="none"><path d="M2 1.5l10 9.5-10 9.5" stroke="#3b4163" stroke-width="3"/></svg><svg class="r" style="left:2499px;top:947px" width="28" height="28" viewBox="0 0 28 28" fill="none"><rect x="2.15" y="2.25" width="8.3" height="8" stroke="#3b4163" stroke-width="2.3"/><rect x="15.55" y="15.65" width="8.3" height="8" stroke="#3b4163" stroke-width="2.3"/><path d="M19.7 11.4V1.8M14.4 6.6L19.7 1.3L25.1 6.6M6.3 14.5V25M0.9 19.8L6.3 25.2L11.7 19.8" stroke="#3b4163" stroke-width="2.4"/></svg><div class="t" style="left:2537px;top:946.0px;font-size:28px;line-height:28px;color:#1e254a;font-weight:normal;letter-spacing:-0.4px;">行间计算</div><svg class="r" style="left:2694px;top:949px" width="14" height="22" viewBox="0 0 14 22" fill="none"><path d="M2 1.5l10 9.5-10 9.5" stroke="#3b4163" stroke-width="3"/></svg><svg class="r" style="left:2499px;top:1011px" width="28" height="28" viewBox="0 0 28 28" fill="none"><path d="M2 24.7L25 2" stroke="#3b4163" stroke-width="3"/><text x="0.2" y="12" font-size="16" font-weight="bold" font-style="italic" fill="#3b4163" font-family="Liberation Sans">A</text><text x="14.6" y="25.3" font-size="16" font-weight="bold" font-style="italic" fill="#3b4163" font-family="Liberation Sans">B</text></svg><div class="t" style="left:2537px;top:1010.0px;font-size:28px;line-height:28px;color:#1e254a;font-weight:normal;letter-spacing:-0.4px;">同环比分析</div><svg class="r" style="left:2694px;top:1013px" width="14" height="22" viewBox="0 0 14 22" fill="none"><path d="M2 1.5l10 9.5-10 9.5" stroke="#3b4163" stroke-width="3"/></svg><svg class="r" style="left:2499px;top:1075px" width="28" height="28" viewBox="0 0 28 28" fill="none"><circle cx="13" cy="13" r="11.5" stroke="#3b4163" stroke-width="2.8"/><circle cx="8" cy="13" r="1.6" fill="#3b4163"/><circle cx="13" cy="13" r="1.6" fill="#3b4163"/><circle cx="18" cy="13" r="1.6" fill="#3b4163"/></svg><div class="t" style="left:2537px;top:1074.0px;font-size:28px;line-height:28px;color:#1e254a;font-weight:normal;letter-spacing:-0.4px;">更多</div><svg class="r" style="left:2694px;top:1077px" width="14" height="22" viewBox="0 0 14 22" fill="none"><path d="M2 1.5l10 9.5-10 9.5" stroke="#3b4163" stroke-width="3"/></svg><div class="r" style="left:2496px;top:1128px;width:220px;height:2px;background:#e6e7ec"></div><div class="r" style="left:2478px;top:1193px;width:268px;height:80px;box-sizing:border-box;border:6px solid #de5848;border-radius:12px;background:#fff"></div><div class="r" style="left:2484px;top:1199px;width:248px;height:68px;background:#f4f4f5"></div><svg class="r" style="left:2499px;top:1157px" width="28" height="28" viewBox="0 0 28 28" fill="none"><circle cx="12.6" cy="4.7" r="3.6" stroke="#3b4163" stroke-width="2.4"/><circle cx="4.4" cy="19.3" r="3.5" stroke="#3b4163" stroke-width="2.4"/><path d="M2.7 11.7Q4.5 7 8.7 5.3M20.2 7.6Q22 9.5 23.1 12.3M8.5 23.4Q11 24.5 13.8 24.5" stroke="#3b4163" stroke-width="2.4"/><path d="M21.4 15.2v9.4M16.7 19.9h9.4" stroke="#3b4163" stroke-width="2.8"/></svg><div class="t" style="left:2537px;top:1156.0px;font-size:28px;line-height:28px;color:#1e254a;font-weight:normal;">自动化</div><svg class="r" style="left:2499px;top:1221px" width="28" height="28" viewBox="0 0 28 28" fill="none"><rect x="0.7" y="2.9" width="24.4" height="20.4" stroke="#3b4163" stroke-width="3"/><rect x="5.6" y="10.8" width="2.9" height="8.2" fill="#3b4163"/><rect x="11.4" y="6.7" width="3" height="12.3" fill="#3b4163"/><rect x="17.3" y="12.5" width="2.9" height="6.5" fill="#3b4163"/></svg><div class="t" style="left:2537px;top:1220.0px;font-size:28px;line-height:28px;color:#1e254a;font-weight:normal;">图表</div><svg class="r" style="left:2499px;top:1285px" width="28" height="28" viewBox="0 0 28 28" fill="none"><rect x="2.4" y="2" width="21.6" height="21.5" stroke="#3b4163" stroke-width="3"/><path d="M5.6 14.5L10.9 9.3L15.5 15.7L20.8 10.4" stroke="#3b4163" stroke-width="2.4"/><circle cx="5.6" cy="14.5" r="1.8" fill="#3b4163"/><circle cx="10.9" cy="9.3" r="1.8" fill="#3b4163"/><circle cx="15.5" cy="15.7" r="1.8" fill="#3b4163"/><circle cx="20.8" cy="10.4" r="1.8" fill="#3b4163"/></svg><div class="t" style="left:2537px;top:1284.0px;font-size:28px;line-height:28px;color:#1e254a;font-weight:normal;">分析表</div><div class="r" style="left:88px;top:1552px;width:2714px;height:46px;background:linear-gradient(180deg,rgba(20,25,40,0),rgba(20,25,40,0.04))"></div><svg class="r" style="left:0;top:0" width="2802" height="1598" viewBox="0 0 2802 1598"><path d="M0 1593.5Q2.5 1596.5 5.5 1598H0Z" fill="#4d4418"/><path d="M2802 1574.5L2801.2 1576A36.7 36.7 0 0 1 2790.5 1598H2802Z" fill="#15200f"/><path d="M2801.2 1576A36.7 36.7 0 0 1 2790.5 1598" stroke="#ffffff" stroke-width="1.2" fill="none"/></svg>
</body></html>
